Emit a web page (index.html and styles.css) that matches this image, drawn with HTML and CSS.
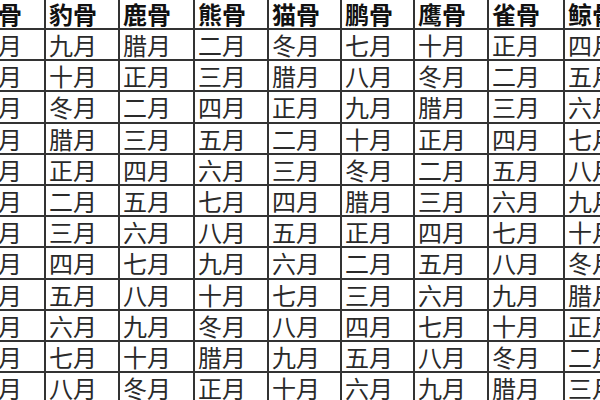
FILE: index.html
```html
<!DOCTYPE html>
<html lang="zh-CN">
<head>
<meta charset="utf-8">
<title>称骨月份表</title>
<link rel="stylesheet" href="styles.css">
</head>
<body>
<div class="frame">
<table class="chart">
<colgroup>
<col class="c0"><col class="c1"><col class="c2"><col class="c3"><col class="c4"><col class="c5"><col class="c6"><col class="c7"><col class="c8">
</colgroup>
<thead>
<tr><th>狼骨</th><th>豹骨</th><th>鹿骨</th><th>熊骨</th><th>猫骨</th><th>鹏骨</th><th>鹰骨</th><th>雀骨</th><th>鲸骨</th></tr>
</thead>
<tbody>
<tr><td>六月</td><td>九月</td><td>腊月</td><td>二月</td><td>冬月</td><td>七月</td><td>十月</td><td>正月</td><td>四月</td></tr>
<tr><td>七月</td><td>十月</td><td>正月</td><td>三月</td><td>腊月</td><td>八月</td><td>冬月</td><td>二月</td><td>五月</td></tr>
<tr><td>八月</td><td>冬月</td><td>二月</td><td>四月</td><td>正月</td><td>九月</td><td>腊月</td><td>三月</td><td>六月</td></tr>
<tr><td>九月</td><td>腊月</td><td>三月</td><td>五月</td><td>二月</td><td>十月</td><td>正月</td><td>四月</td><td>七月</td></tr>
<tr><td>十月</td><td>正月</td><td>四月</td><td>六月</td><td>三月</td><td>冬月</td><td>二月</td><td>五月</td><td>八月</td></tr>
<tr><td>冬月</td><td>二月</td><td>五月</td><td>七月</td><td>四月</td><td>腊月</td><td>三月</td><td>六月</td><td>九月</td></tr>
<tr><td>腊月</td><td>三月</td><td>六月</td><td>八月</td><td>五月</td><td>正月</td><td>四月</td><td>七月</td><td>十月</td></tr>
<tr><td>正月</td><td>四月</td><td>七月</td><td>九月</td><td>六月</td><td>二月</td><td>五月</td><td>八月</td><td>冬月</td></tr>
<tr><td>二月</td><td>五月</td><td>八月</td><td>十月</td><td>七月</td><td>三月</td><td>六月</td><td>九月</td><td>腊月</td></tr>
<tr><td>三月</td><td>六月</td><td>九月</td><td>冬月</td><td>八月</td><td>四月</td><td>七月</td><td>十月</td><td>正月</td></tr>
<tr><td>四月</td><td>七月</td><td>十月</td><td>腊月</td><td>九月</td><td>五月</td><td>八月</td><td>冬月</td><td>二月</td></tr>
<tr><td>五月</td><td>八月</td><td>冬月</td><td>正月</td><td>十月</td><td>六月</td><td>九月</td><td>腊月</td><td>三月</td></tr>
</tbody>
</table>
</div>
</body>
</html>
```
FILE: styles.css
```css
html, body {
  margin: 0;
  padding: 0;
  background: #fff;
}
.frame {
  width: 600px;
  height: 400px;
  overflow: hidden;
}
.chart {
  margin-left: -31px;
  border-collapse: collapse;
  table-layout: fixed;
  width: 669px;
  font-family: "Noto Sans CJK SC", "Noto Sans CJK TC", sans-serif;
  color: #2a2a2a;
}
.c0 { width: 75px; }
.c1 { width: 74px; }
.c2 { width: 75px; }
.c3 { width: 74px; }
.c4 { width: 73px; }
.c5 { width: 73px; }
.c6 { width: 74px; }
.c7 { width: 76px; }
.c8 { width: 75px; }
.chart th,
.chart td {
  border: 2px solid #333;
  padding: 0 0 0 3px;
  text-align: left;
  white-space: nowrap;
  overflow: hidden;
  font-size: 24px;
}
.chart thead tr th {
  border-top: none;
  height: 28px;
  line-height: 28px;
  font-weight: 700;
  color: #111;
}
.chart tbody td {
  height: 29.2px;
  line-height: 29px;
  font-weight: 400;
}
```
